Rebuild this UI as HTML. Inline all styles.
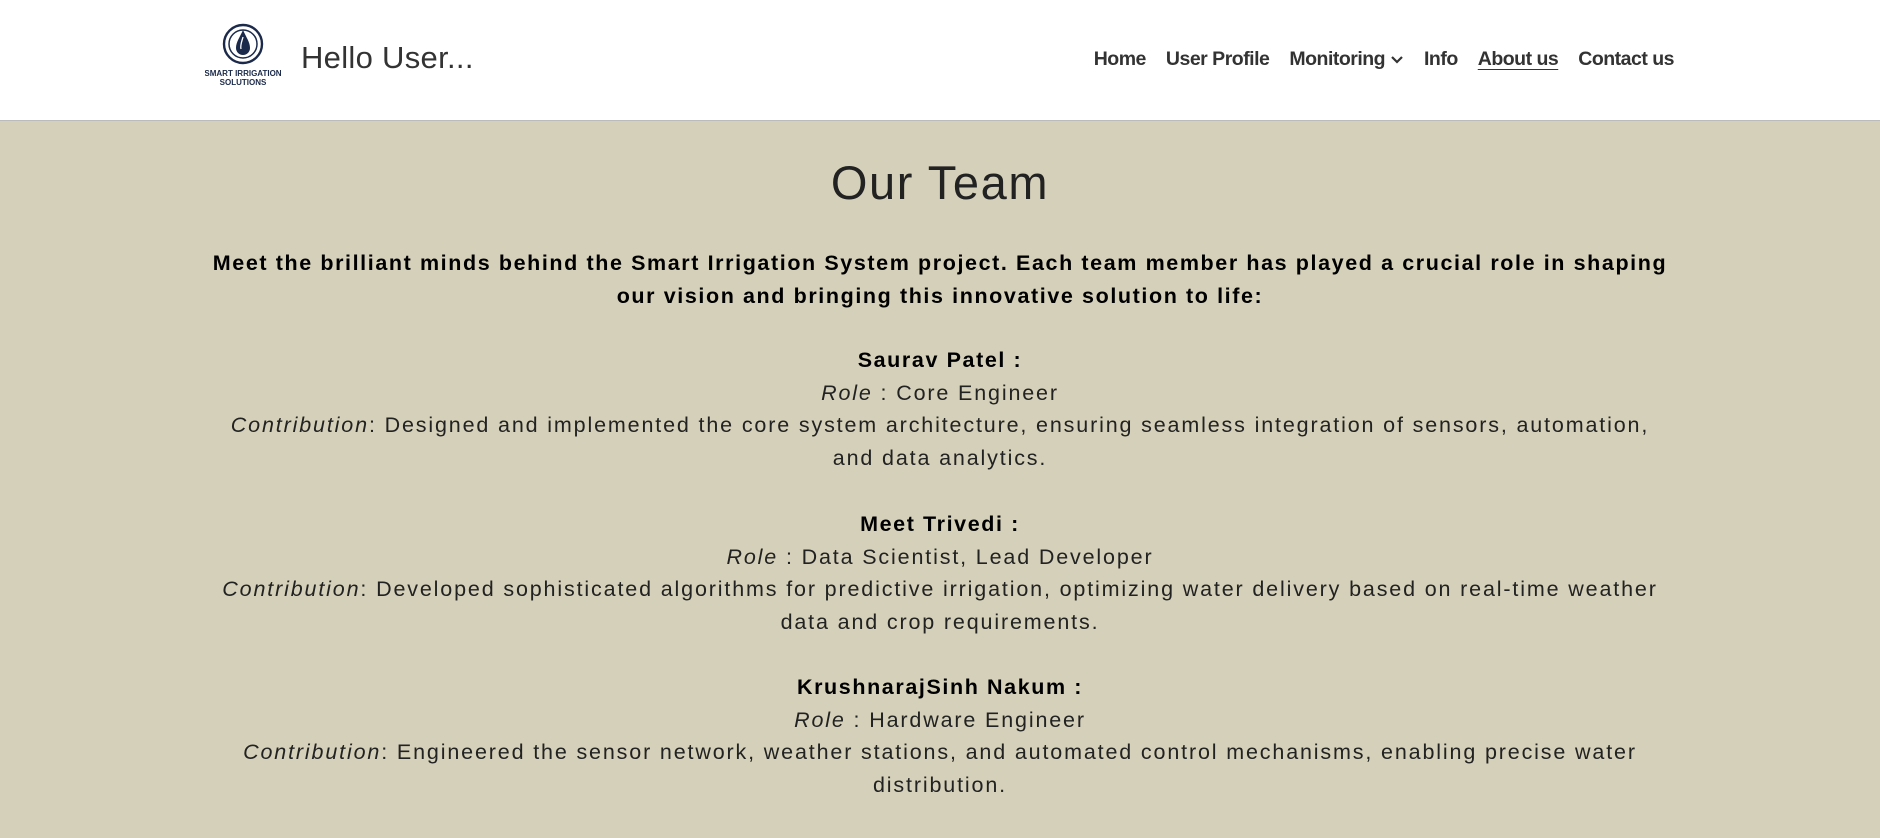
<!DOCTYPE html>
<html><head><meta charset="utf-8"><style>
*{margin:0;padding:0;box-sizing:border-box}
body{width:1880px;height:838px;overflow:hidden;background:#d5d0b9;font-family:"Liberation Sans",sans-serif;color:#222}
header{position:absolute;left:0;top:0;width:1880px;height:121px;background:#fff;border-bottom:1px solid #bbb}
.logo{position:absolute;left:205px;top:22px;width:76px;height:70px}
.hello{position:absolute;left:301px;top:40px;font-size:31px;color:#333;letter-spacing:0.3px}
nav{position:absolute;right:206px;top:48px;font-size:19.5px;font-weight:bold;color:#333;letter-spacing:-0.5px;display:flex;gap:20px}
nav span.u{text-decoration:underline;text-underline-offset:4px}
h1{position:absolute;top:155px;width:100%;text-align:center;font-weight:normal;font-size:47px;color:#222;letter-spacing:1.6px}
.c{position:absolute;left:0;width:1880px;text-align:center;font-size:21.5px;line-height:32.7px;letter-spacing:1.85px;white-space:nowrap}
b{color:#000;letter-spacing:1.6px}
</style></head><body>
<header>
<svg class="logo" viewBox="0 0 76 70">
<circle cx="38" cy="22" r="19" fill="none" stroke="#1b2a4a" stroke-width="2.4"/>
<circle cx="38" cy="22" r="14" fill="none" stroke="#1b2a4a" stroke-width="1.5"/>
<path d="M38 8 C35 15 31 20 31 26 A7 7 0 0 0 45 26 C45 20 41 15 38 8Z" fill="#1b2a4a"/>
<path d="M38 15 C37 19 35 23 36 27" stroke="#fff" stroke-width="1.3" fill="none"/>
<text x="38" y="54" font-size="8" font-weight="bold" text-anchor="middle" fill="#1b2a4a" font-family="Liberation Sans">SMART IRRIGATION</text>
<text x="38" y="63" font-size="8" font-weight="bold" text-anchor="middle" fill="#1b2a4a" font-family="Liberation Sans">SOLUTIONS</text>
</svg>
<div class="hello">Hello User...</div>
<nav><span>Home</span><span>User Profile</span><span>Monitoring <svg width="14" height="10" viewBox="0 0 14 10"><path d="M2 2 L7 7 L12 2" stroke="#333" stroke-width="2.2" fill="none"/></svg></span><span>Info</span><span class="u">About us</span><span>Contact us</span></nav>
</header>
<h1>Our Team</h1>
<div class="c" style="top:247px"><b>Meet the brilliant minds behind the Smart Irrigation System project. Each team member has played a crucial role in shaping<br>our vision and bringing this innovative solution to life:</b></div>
<div class="c" style="top:344px"><b>Saurav Patel :</b><br><i>Role</i> : Core Engineer<br><i>Contribution</i>: Designed and implemented the core system architecture, ensuring seamless integration of sensors, automation,<br>and data analytics.</div>
<div class="c" style="top:508px"><b>Meet Trivedi :</b><br><i>Role</i> : Data Scientist, Lead Developer<br><i>Contribution</i>: Developed sophisticated algorithms for predictive irrigation, optimizing water delivery based on real-time weather<br>data and crop requirements.</div>
<div class="c" style="top:671px"><b>KrushnarajSinh Nakum :</b><br><i>Role</i> : Hardware Engineer<br><i>Contribution</i>: Engineered the sensor network, weather stations, and automated control mechanisms, enabling precise water<br>distribution.</div>
</body></html>
